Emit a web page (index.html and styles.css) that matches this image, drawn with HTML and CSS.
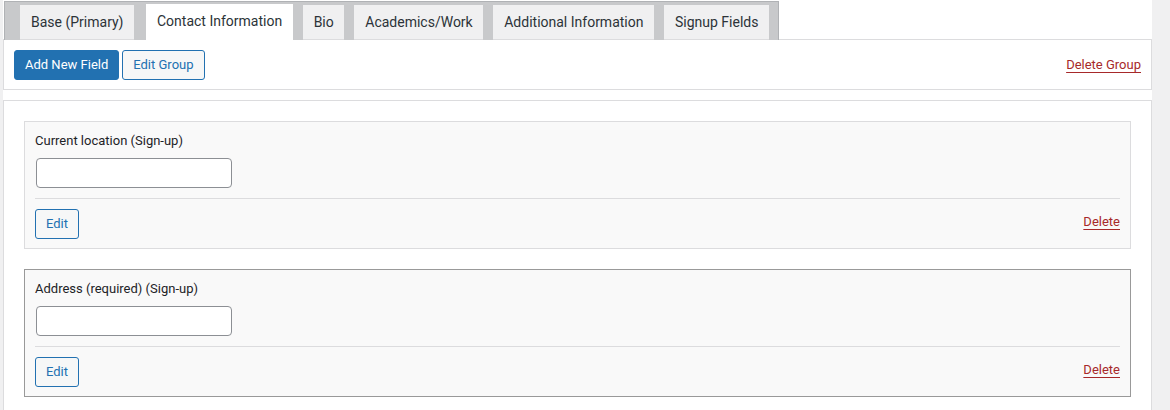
FILE: index.html
```html
<!DOCTYPE html>
<html lang="en">
<head>
    <meta charset="UTF-8">
    <title>Profile Fields</title>
    <link rel="stylesheet" href="styles.css">
</head>
<body>
    <div class="wrap">
        <ul class="tabs">
            <li>Base (Primary)</li>
            <li class="active">Contact Information</li>
            <li>Bio</li>
            <li>Academics/Work</li>
            <li>Additional Information</li>
            <li>Signup Fields</li>
        </ul>

        <div class="panel toolbar">
            <a href="#" class="button primary">Add New Field</a>
            <a href="#" class="button">Edit Group</a>
            <a href="#" class="delete group-delete">Delete Group</a>
        </div>

        <div class="panel fields">
            <div class="field">
                <label>Current location (Sign-up)</label>
                <input type="text">
                <div class="field-actions">
                    <a href="#" class="button small">Edit</a>
                    <a href="#" class="delete">Delete</a>
                </div>
            </div>

            <div class="field hover">
                <label>Address (required) (Sign-up)</label>
                <input type="text">
                <div class="field-actions">
                    <a href="#" class="button small">Edit</a>
                    <a href="#" class="delete">Delete</a>
                </div>
            </div>
        </div>
    </div>
</body>
</html>
```

FILE: styles.css
```css
body {
    font-family: Roboto, "Liberation Sans", sans-serif;
    font-size: 13px;
    color: #1d2327;
    background-color: #f0f0f1;
    margin: 0;
    padding: 0;
}
.wrap {
    margin-left: 3px;
    width: 1149px;
    min-height: 410px;
    background: #fff;
}
.tabs {
    display: flex;
    gap: 10px;
    width: fit-content;
    margin: 0 0 0 1px;
    padding: 3px 9px 0 15px;
    list-style: none;
    background: #c8c9cb;
    border: 1px solid #b0b2b5;
    border-bottom: 0;
    position: relative;
    top: 1px;
}
.tabs li {
    height: 34px;
    line-height: 34px;
    padding: 0 10.5px 0 11px;
    font-size: 14px;
    color: #2c3338;
    background: #f0f0f1;
    border-bottom: 1px solid #dcdcde;
}
.tabs li.active {
    background: #fff;
    margin-top: -1px;
    height: 35px;
    margin-left: 2px;
    border-bottom-color: #fff;
}
.panel {
    border: 1px solid #dcdcde;
    background: #fff;
}
.toolbar {
    display: flex;
    align-items: center;
    gap: 3px;
    padding: 10px 10px 9px 10px;
}
.button {
    display: inline-block;
    height: 28px;
    line-height: 28px;
    padding: 0 10px;
    border: 1px solid #2271b1;
    border-radius: 3px;
    background: #f6f7f7;
    color: #2271b1;
    text-decoration: none;
    font-size: 13px;
}
.button.primary {
    background: #2271b1;
    color: #fff;
}
.delete {
    color: #a7292a;
    font-size: 13px;
    text-decoration: underline;
    text-underline-offset: 3px;
}
.group-delete {
    margin-left: auto;
    position: relative;
    top: -1px;
}
.fields {
    margin-top: 10px;
    padding: 20px;
}
.field {
    background: #f9f9f9;
    border: 1px solid #dcdcde;
    padding: 9px 10px 9px 10px;
    margin-bottom: 20px;
}
.field.hover {
    border-color: #999;
}
.field label {
    display: block;
    line-height: 20px;
}
.field input {
    display: block;
    width: 196px;
    height: 30px;
    box-sizing: border-box;
    margin: 7px 0 10px 1px;
    border: 1px solid #8c8f94;
    border-radius: 4px;
    background: #fff;
}
.field-actions {
    display: flex;
    justify-content: space-between;
    align-items: center;
    border-top: 1px solid #dcdcde;
    padding-top: 10px;
}
.field-actions .delete {
    position: relative;
    top: -3px;
}
```
